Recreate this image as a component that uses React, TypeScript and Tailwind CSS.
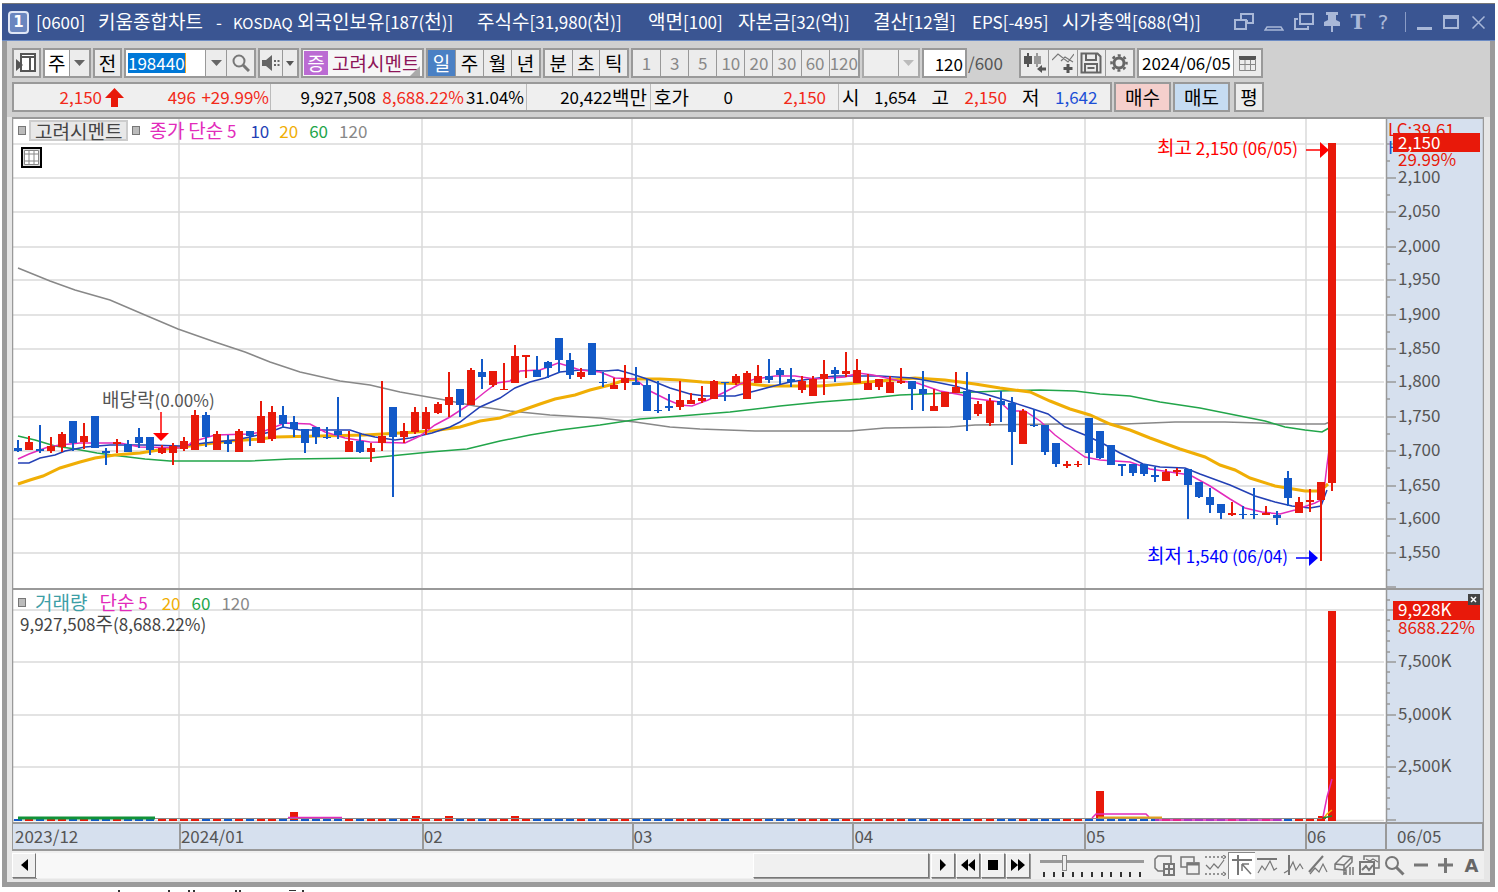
import type { ReactNode } from 'react'

const RED = '#e8190a'
const BLUE = '#1259c8'
const FONT = "font-['Noto_Sans_CJK_KR',sans-serif]"

type Candle = ['r' | 'b', number, number, number, number]

// colour, body top, body bottom, high, low
const CANDLES: Candle[] = [
  ['b', 448, 451, 440, 452], ['r', 442, 450, 436, 450], ['b', 449, 451, 425, 453], ['r', 446, 451, 437, 453],
  ['r', 434, 447, 432, 452], ['b', 421, 443, 421, 451], ['r', 436, 442, 423, 449], ['b', 416, 448, 416, 448],
  ['b', 451, 453, 448, 465], ['r', 442, 444, 439, 453], ['b', 444, 452, 440, 452], ['b', 437, 443, 428, 448],
  ['b', 437, 450, 437, 455], ['r', 448, 453, 445, 454], ['r', 446, 453, 443, 465], ['r', 441, 449, 437, 451],
  ['r', 415, 450, 410, 450], ['b', 415, 437, 412, 447], ['r', 434, 450, 431, 450], ['b', 441, 444, 435, 452],
  ['r', 431, 452, 429, 452], ['b', 431, 436, 431, 446], ['r', 416, 443, 401, 443], ['r', 412, 439, 406, 441],
  ['b', 415, 424, 406, 428], ['b', 422, 429, 416, 437], ['b', 429, 443, 429, 453], ['b', 427, 437, 427, 444],
  ['b', 437, 438, 427, 439], ['b', 431, 435, 397, 439], ['r', 441, 452, 431, 452], ['b', 441, 452, 434, 453],
  ['r', 448, 452, 443, 462], ['r', 436, 443, 381, 451], ['b', 407, 437, 407, 497], ['r', 431, 437, 423, 443],
  ['r', 412, 432, 407, 434], ['r', 412, 429, 407, 435], ['r', 404, 413, 402, 414], ['r', 397, 405, 372, 417],
  ['b', 389, 405, 389, 417], ['r', 370, 405, 368, 405], ['b', 372, 377, 359, 389], ['r', 371, 385, 371, 387],
  ['r', 389, 390, 363, 390], ['r', 356, 383, 345, 383], ['r', 355, 357, 355, 378], ['b', 370, 377, 356, 377],
  ['b', 362, 368, 361, 378], ['b', 338, 360, 338, 373], ['b', 360, 375, 353, 379], ['r', 372, 377, 368, 379],
  ['b', 343, 375, 343, 375], ['b', 382, 383, 372, 387], ['r', 385, 389, 378, 389], ['r', 378, 383, 365, 390],
  ['b', 382, 385, 367, 385], ['b', 385, 411, 379, 411], ['b', 410, 411, 381, 413], ['b', 406, 408, 394, 411],
  ['r', 400, 407, 381, 410], ['r', 400, 404, 393, 404], ['r', 398, 401, 386, 403], ['r', 381, 399, 380, 399],
  ['b', 382, 383, 382, 401], ['r', 376, 383, 374, 385], ['r', 373, 399, 371, 399], ['r', 376, 383, 365, 383],
  ['b', 376, 380, 359, 383], ['b', 370, 375, 368, 384], ['b', 379, 382, 368, 387], ['r', 381, 390, 376, 393],
  ['r', 379, 396, 376, 396], ['r', 374, 379, 360, 395], ['b', 370, 374, 367, 382], ['r', 371, 374, 352, 377],
  ['r', 370, 383, 359, 383], ['r', 383, 390, 374, 390], ['r', 379, 387, 379, 390], ['r', 382, 393, 376, 393],
  ['r', 381, 383, 368, 384], ['b', 381, 389, 381, 410], ['b', 389, 394, 371, 411], ['r', 406, 411, 389, 411],
  ['r', 392, 407, 392, 407], ['r', 387, 393, 372, 393], ['b', 391, 420, 372, 431], ['r', 404, 414, 401, 416],
  ['r', 401, 423, 398, 426], ['b', 401, 405, 391, 422], ['b', 403, 432, 397, 465], ['r', 411, 444, 409, 444],
  ['b', 425, 426, 409, 427], ['b', 425, 452, 425, 455], ['b', 443, 464, 443, 467], ['r', 464, 466, 461, 468],
  ['r', 464, 465, 461, 467], ['b', 418, 453, 418, 465], ['b', 431, 458, 431, 459], ['b', 445, 465, 445, 465],
  ['b', 464, 466, 464, 476], ['b', 464, 473, 464, 476], ['b', 464, 474, 464, 476], ['b', 475, 477, 467, 482],
  ['r', 472, 481, 469, 481], ['r', 470, 472, 468, 476], ['b', 469, 485, 469, 519], ['b', 482, 497, 482, 498],
  ['b', 497, 505, 488, 513], ['b', 504, 513, 504, 519], ['r', 513, 515, 502, 516], ['b', 514, 515, 506, 519],
  ['b', 514, 515, 488, 519], ['r', 513, 515, 506, 515], ['b', 515, 518, 511, 525], ['b', 478, 498, 471, 506],
  ['r', 502, 513, 497, 513], ['r', 500, 502, 489, 512], ['r', 482, 500, 482, 561], ['r', 143, 483, 143, 491],
]

const MA5 =
  '18,459 29,454 40,450 48,447 60,445 80,443 120,443 140,447 185,448 192,442 215,435 250,434 262,432 285,423 310,424 325,432 345,438 370,442 405,443 420,436 435,425 450,417 470,404 485,392 497,383 510,381 520,371 540,370 548,367 558,363 568,366 580,370 600,372 615,378 635,379 650,391 668,400 680,405 692,406 708,400 725,392 740,384 755,379 775,376 795,376 815,379 830,378 845,377 858,373 873,375 900,381 917,383 940,391 962,395 970,398 1000,402 1010,411 1025,411 1040,421 1055,435 1075,450 1085,457 1100,460 1130,462 1150,469 1170,472 1190,475 1210,486 1230,499 1245,508 1262,512 1280,514 1295,510 1315,503 1323,499 1327,465 1329,450'
const MA10 =
  '18,463 29,463 40,458 55,455 65,451 85,447 110,445 150,445 180,446 205,443 235,440 250,437 270,432 283,427 300,430 350,430 362,434 375,437 395,440 410,438 432,433 450,427 460,422 480,407 500,398 515,388 530,382 545,378 560,372 580,370 605,371 618,370 632,374 650,380 670,388 690,394 705,396 735,396 755,391 770,387 790,382 810,379 835,376 880,376 912,378 935,382 955,386 968,390 985,394 1005,400 1030,408 1048,414 1065,427 1085,435 1102,443 1120,453 1143,464 1160,467 1185,468 1200,474 1230,485 1255,496 1275,502 1292,506 1310,508 1321,506 1327,490'
const MA20 =
  '18,484 30,480 43,476 60,468 80,462 95,458 115,455 140,453 165,449 190,446 230,441 260,439 275,437 320,436 365,435 400,433 432,431 460,427 480,421 500,418 520,411 540,404 555,399 575,395 590,390 610,385 625,380 640,379 660,379 680,380 702,382 720,383 750,384 770,386 820,386 845,384 880,381 915,378 945,380 975,384 1000,388 1030,392 1050,401 1070,409 1090,415 1110,424 1130,430 1150,438 1180,449 1205,457 1220,465 1235,470 1250,478 1275,486 1305,491 1320,491 1328,484'
const MA60 =
  '18,436 35,440 55,446 75,449 97,453 120,456 145,459 170,461 250,461 290,459 370,458 390,456 430,452 467,449 500,441 530,435 560,430 600,425 640,419 680,416 730,412 780,406 820,402 860,399 900,395 950,393 1000,391 1040,390 1075,391 1100,394 1130,396 1160,402 1200,408 1240,416 1265,421 1285,427 1305,430 1322,432 1329,428'
const MA120 =
  '18,268 50,281 75,290 110,300 145,315 178,329 215,342 245,352 270,362 300,372 340,381 370,385 400,392 445,400 475,406 510,411 550,415 600,418 635,422 670,427 700,429 755,431 850,431 885,428 950,427 975,425 1060,424 1125,424 1175,422 1225,422 1260,423 1275,424 1325,424 1332,421'

const PRICE_GRID = [144, 178, 212, 247, 280, 315, 349, 382, 417, 451, 486, 519, 553]
const PRICE_LABELS = ['', '2,100', '2,050', '2,000', '1,950', '1,900', '1,850', '1,800', '1,750', '1,700', '1,650', '1,600', '1,550']
const MONTHS = [179, 422, 632, 853, 1085, 1306]
const VOLUME_GRID = [610, 662, 715, 767]
const VOLUME_LABELS = ['', '7,500K', '5,000K', '2,500K']

const candleX = (i: number) => Math.round(18 + i * 11.04)

const TITLE = [
  { text: '[0600]', w: 'w-[62px]' },
  { text: '키움종합차트', w: 'w-[118px]' },
  { text: '-', w: 'w-[17px]' },
  { text: 'KOSDAQ', w: 'w-[64px]', size: 'text-[15px]' },
  { text: '외국인보유[187(천)]', w: 'w-[180px]' },
  { text: '주식수[31,980(천)]', w: 'w-[171px]' },
  { text: '액면[100]', w: 'w-[90px]' },
  { text: '자본금[32(억)]', w: 'w-[135px]' },
  { text: '결산[12월]', w: 'w-[99px]' },
  { text: 'EPS[-495]', w: 'w-[90px]' },
  { text: '시가총액[688(억)]', w: 'w-[152px]' },
]

// Hangul is set larger than the digits and Latin letters beside it
const splitHangul = (text: string) => text.split(/([가-힣]+)/).filter(Boolean)
const isHangul = (part: string) => /[가-힣]/.test(part)

function Mixed({ text }: { text: string }) {
  return splitHangul(text).map((part, i) => (isHangul(part) ? <span key={i} className="text-[19px]">{part}</span> : part))
}

function SvgMixed({ text }: { text: string }) {
  return splitHangul(text).map((part, i) => (isHangul(part) ? <tspan key={i} className="text-[19px]">{part}</tspan> : part))
}

function Down({ className = 'text-[#666]' }: { className?: string }) {
  return (
    <svg width="11" height="6" viewBox="0 0 11 6" className={className}>
      <path d="M0 0h11L5.5 6z" fill="currentColor" />
    </svg>
  )
}

function Group({ children, className = '' }: { children: ReactNode; className?: string }) {
  return (
    <div className={`flex h-[30px] shrink-0 divide-x divide-[#999] border-2 border-[#999] bg-[#ececec] ${className}`}>{children}</div>
  )
}

interface ToolProps {
  label: string
  children: ReactNode
  size?: string
  className?: string
}

function Tool({ label, children, size = 'flex-1', className = '' }: ToolProps) {
  return (
    <button aria-label={label} className={`flex items-center justify-center ${size} ${className}`}>
      {children}
    </button>
  )
}

function TitleBar() {
  return (
    <header className="flex h-[38px] items-center border-t border-[#777] border-b border-b-[#6d8cc4] bg-[#3a5592] pl-[6px] text-[17px] leading-[22px] text-white">
      <span className="mr-[7px] flex h-[23px] w-[21px] shrink-0 items-center justify-center rounded-sm border-2 border-[#dfe6f5] bg-[#6a86bf] font-['DejaVu_Sans'] text-[15px] font-bold leading-none">1</span>
      <h1 className="flex items-baseline whitespace-nowrap">
        {TITLE.map((t) => (
          <span key={t.text} className={`shrink-0 ${t.w} ${t.size ?? ''}`}><Mixed text={t.text} /></span>
        ))}
      </h1>
      <div className="ml-[15px] flex shrink-0 items-center text-[#a9b8d8]">
        <Tool label="화면 분리" size="w-[30px]">
          <svg width="22" height="20" viewBox="0 0 22 20" fill="none" stroke="currentColor" strokeWidth="2">
            <path d="M8 7V2h12v9h-6M2 8h11v9H2zM14 11v-3" />
          </svg>
        </Tool>
        <Tool label="접기" size="w-[30px]">
          <svg width="20" height="20" viewBox="0 0 20 20" fill="none" stroke="currentColor" strokeWidth="1.5">
            <path d="M3 15h14l2 3H1z" />
          </svg>
        </Tool>
        <Tool label="복제" size="w-[30px]">
          <svg width="22" height="20" viewBox="0 0 22 20" fill="none" stroke="currentColor" strokeWidth="2">
            <path d="M7 2h13v10H7zM5 7H2v10h13v-3" />
          </svg>
        </Tool>
        <Tool label="고정" size="w-[26px]">
          <svg width="18" height="22" viewBox="0 0 18 22" fill="currentColor">
            <path d="M3 1h12v3h-2v5l4 2v4h-7v6H8v-6H1v-4l4-2V4H3z" />
          </svg>
        </Tool>
        <Tool label="글꼴" size="w-[26px]" className="font-['DejaVu_Serif'] text-[20px] font-bold leading-none">T</Tool>
        <Tool label="도움말" size="w-[24px]" className="font-['DejaVu_Sans'] text-[20px] leading-none">?</Tool>
        <span className="ml-[10px] h-5 w-px bg-[#8a9cc6]" />
        <Tool label="최소화" size="w-[16px]" className="ml-[10px]">
          <span className="mt-[13px] h-[3px] w-[15px] bg-current" />
        </Tool>
        <Tool label="최대화" size="w-[16px]" className="ml-[11px]">
          <span className="h-[14px] w-[16px] border-2 border-t-4 border-current" />
        </Tool>
        <Tool label="닫기" size="w-[14px]" className="ml-[12px]">
          <svg width="13" height="13" viewBox="0 0 13 13" stroke="currentColor" strokeWidth="1.5">
            <path d="M.5.5l12 12M12.5.5l-12 12" />
          </svg>
        </Tool>
      </div>
    </header>
  )
}

function Toolbar() {
  return (
    <div className="flex gap-[2px] pt-[7px] text-[19px] leading-[22px] text-black">
      <Group className="w-[29px]">
        <Tool label="패널">
          <svg width="21" height="20" viewBox="0 0 21 20">
            <path d="M5 1h14v17H5zM5 4h14M14 4v14" fill="#fff" stroke="#555" strokeWidth="2" />
            <path d="M0 6l7 6-7 6z" fill="#555" />
          </svg>
        </Tool>
      </Group>
      <div className="relative h-[30px] w-[48px] shrink-0 border-2 border-[#999] bg-white">
        <select aria-label="종목 구분" className="h-full w-full appearance-none pl-[3px] outline-none">
          <option>주</option>
        </select>
        <span className="pointer-events-none absolute inset-y-0 right-0 flex w-[20px] items-center justify-center border-l border-[#999] bg-[#ececec]">
          <Down />
        </span>
      </div>
      <Group className="w-[29px]"><Tool label="전">전</Tool></Group>
      <Group className="w-[132px]">
        <div className="flex w-[80px] items-center bg-white pl-[2px]">
          <input aria-label="종목코드" defaultValue="198440" className="h-[20px] w-[58px] border-r border-[#f5a623] bg-[#0078d7] text-[17px] text-white outline-none" />
        </div>
        <button aria-label="종목 목록" className="flex w-[21px] items-center justify-center"><Down /></button>
        <Tool label="검색">
          <svg width="18" height="18" viewBox="0 0 18 18" fill="none" stroke="#777">
            <circle cx="7" cy="7" r="5.5" strokeWidth="2" />
            <path d="M11 11l6 6" strokeWidth="3" />
          </svg>
        </Tool>
      </Group>
      <Group className="w-[41px]">
        <Tool label="소리">
          <svg width="18" height="16" viewBox="0 0 18 16" fill="#666">
            <path d="M0 5h4l6-5v16l-6-5H0zM12 5h2v2h-2zM12 9h2v2h-2zM15.5 5h2v2h-2zM15.5 9h2v2h-2z" />
          </svg>
        </Tool>
        <button aria-label="소리 설정" className="flex w-[14px] items-center justify-center">
          <svg width="8" height="5" viewBox="0 0 8 5"><path d="M0 0h8L4 5z" fill="#555" /></svg>
        </button>
      </Group>
      <div className="flex h-[30px] w-[123px] shrink-0 items-center border-2 border-[#999] bg-[#f6f6f6] pl-px">
        <span className="mr-[4px] flex h-[24px] w-[24px] shrink-0 items-center justify-center bg-[#bb6bd3] text-white">증</span>
        <span className="whitespace-nowrap text-[#8d1558]">고려시멘트</span>
        <svg width="10" height="10" viewBox="0 0 10 10" className="-ml-[9px] shrink-0 self-end"><path d="M10 0v10H0z" fill="#aaa" /></svg>
      </div>
      <Group className="w-[115px]">
        <Tool label="일" className="bg-[#4a80c4] text-white">일</Tool>
        <Tool label="주">주</Tool>
        <Tool label="월">월</Tool>
        <Tool label="년">년</Tool>
      </Group>
      <Group className="w-[86px]">
        <Tool label="분">분</Tool>
        <Tool label="초">초</Tool>
        <Tool label="틱">틱</Tool>
      </Group>
      <Group className="w-[229px] text-[17px] text-[#888]">
        {['1', '3', '5', '10', '20', '30', '60', '120'].map((n) => (
          <Tool key={n} label={`${n}분`}>{n}</Tool>
        ))}
      </Group>
      <div className="relative h-[30px] w-[58px] shrink-0 border-2 border-[#aaa] bg-[#eee]">
        <select aria-label="사용자 주기" disabled className="h-full w-full appearance-none outline-none">
          <option />
        </select>
        <span className="pointer-events-none absolute inset-y-0 right-0 flex w-[20px] items-center justify-center border-l border-[#999]">
          <Down className="text-[#bbb]" />
        </span>
      </div>
      <label className="flex items-center text-[17px]">
        <input aria-label="조회 개수" defaultValue="120" className="h-[30px] w-[45px] border-2 border-[#999] bg-white pr-[2px] text-right outline-none" />
        <span className="w-[50px] pl-px text-[#555]">/600</span>
      </label>
      <Group className="w-[116px]">
        <Tool label="봉 추가">
          <svg width="22" height="22" viewBox="0 0 22 22">
            <path d="M0 4h8v8H0zM3 1h2v14H3z" fill="#555" />
            <path d="M10 4h7v8h-7zM12 1h2v14h-2z" fill="#999" />
            <path d="M13 17l5-4v2.500h4v3h-4V21z" fill="#555" />
          </svg>
        </Tool>
        <Tool label="지표 추가">
          <svg width="22" height="22" viewBox="0 0 22 22" fill="none" stroke="#777">
            <path d="M0 8l6-6 10 8 6-8M9 9l4-4 8 5" strokeWidth="1.2" />
            <path d="M16 12v9M11.5 16.5h9" stroke="#555" strokeWidth="3" />
          </svg>
        </Tool>
        <Tool label="저장">
          <svg width="22" height="22" viewBox="0 0 22 22" fill="none" stroke="#666" strokeWidth="2">
            <path d="M1.5 1.5h16l3 3v16h-19zM6 2v6h10V2M5 20v-8h12v8M7.5 16h7" />
          </svg>
        </Tool>
        <Tool label="설정">
          <svg width="18" height="18" viewBox="0 0 18 18" fill="none" stroke="#666">
            <circle cx="9" cy="9" r="5" strokeWidth="3" />
            <circle cx="9" cy="9" r="7.5" strokeWidth="2.5" strokeDasharray="3 2.89" strokeDashoffset="1.5" />
          </svg>
        </Tool>
      </Group>
      <Group className="w-[126px]">
        <input aria-label="조회 일자" defaultValue="2024/06/05" className="w-[95px] bg-white pl-[3px] text-[17px] outline-none" />
        <Tool label="달력">
          <svg width="17" height="16" viewBox="0 0 17 16">
            <path d="M0 1h17v4H0z" fill="#555" />
            <path d="M.5 4v11.5h16V4M.5 9.5h16M6 5v10M11.5 5v10" fill="none" stroke="#888" />
          </svg>
        </Tool>
      </Group>
    </div>
  )
}

function QuoteBar() {
  return (
    <div className="flex gap-[2px] pt-[4px] text-[17px] leading-[22px] text-black">
      <div className="flex h-[30px] w-[1100px] items-center divide-x divide-[#bbb] whitespace-nowrap border-2 border-[#999] bg-[#efefef] [&>div]:flex [&>div]:h-full [&>div]:shrink-0 [&>div]:items-center">
        <div className="w-[257px] text-[#f22a1a]">
          <span className="w-[88px] text-right">2,150</span>
          <svg width="19" height="19" viewBox="0 0 19 19" className="ml-[3px]"><path d="M9.5 0L19 10h-6v9H6v-9H0z" fill={RED} /></svg>
          <span className="w-[72px] text-right">496</span>
          <span className="w-[73px] text-right">+29.99%</span>
        </div>
        <div className="w-[256px]">
          <span className="w-[105px] text-right">9,927,508</span>
          <span className="w-[88px] text-right text-[#f22a1a]">8,688.22%</span>
          <span className="w-[60px] text-right">31.04%</span>
        </div>
        <div className="w-[124px] justify-end pr-[3px]"><Mixed text="20,422백만" /></div>
        <div className="w-[188px] pl-[3px]">
          <Mixed text="호가" />
          <span className="ml-auto">0</span>
          <span className="w-[105px] pr-[12px] text-right text-[#f22a1a]">2,150</span>
        </div>
        <div className="flex-1 pl-[3px]">
          <Mixed text="시" />
          <span className="w-[57px] text-right">1,654</span>
          <span className="ml-[15px]"><Mixed text="고" /></span>
          <span className="w-[58px] text-right text-[#f22a1a]">2,150</span>
          <span className="ml-[15px]"><Mixed text="저" /></span>
          <span className="w-[58px] text-right text-[#1c4fd6]">1,642</span>
        </div>
      </div>
      <button className="h-[30px] w-[57px] border-2 border-[#999] bg-[#f5cfcc] text-[19px]">매수</button>
      <button className="h-[30px] w-[57px] border-2 border-[#999] bg-[#c6dcf2] text-[19px]">매도</button>
      <button className="ml-[2px] h-[30px] w-[30px] border-2 border-[#999] bg-[#ececec] text-[19px]">평</button>
    </div>
  )
}

function Marker() {
  return <span className="h-[9px] w-[8px] shrink-0 border border-[#777] bg-[#bbb]" />
}

function PriceChart() {
  return (
    <svg viewBox="12 119 1472 469" className="block h-auto w-full text-[17px]" role="img" aria-label="가격 차트">
      <rect x="12" y="119" width="1374" height="469" fill="#fff" />
      <rect x="1386" y="119" width="98" height="469" fill="#d6e0ee" />
      <g stroke="#dadada" strokeWidth="1.5">
        {PRICE_GRID.map((y) => <path key={y} d={`M13 ${y}H1384`} />)}
        {MONTHS.map((x) => <path key={x} d={`M${x} 119V588`} />)}
      </g>
      <g stroke="#999" strokeWidth="1.5">
        <path d="M12.500 119V588M1483.500 119V588M1386.500 119V588" />
        {PRICE_GRID.map((y) => <path key={y} d={`M1386 ${y}h10M1386 ${y + 17}h4`} />)}
        <path d="M1386 587h10" />
      </g>
      <g fill="none" strokeWidth="1.5">
        <polyline points={MA120} stroke="#888" />
        <polyline points={MA60} stroke="#22a54a" />
        <polyline points={MA20} stroke="#f0ae05" strokeWidth="3" />
        <polyline points={MA10} stroke="#2340b5" />
        <polyline points={MA5} stroke="#e22bbb" />
      </g>
      {CANDLES.map(([c, top, bottom, high, low], i) => (
        <g key={i} fill={c === 'r' ? RED : BLUE}>
          <rect x={candleX(i) - 1} y={high} width="2" height={low - high} />
          <rect x={candleX(i) - 4} y={top} width="8" height={bottom - top} />
        </g>
      ))}
      <text x="102" y="407" fill="#555"><SvgMixed text="배당락(0.00%)" /></text>
      <path d="M161 412v22" stroke="#f00" strokeWidth="1.5" />
      <path d="M153 433h16l-8 8z" fill="#f00" />
      <text x="1298" y="155" textAnchor="end" fill="#f00"><SvgMixed text="최고 2,150 (06/05)" /></text>
      <path d="M1306 150h16" stroke="#f00" strokeWidth="1.5" />
      <path d="M1320 142v16l9-8z" fill="#f00" />
      <text x="1288" y="563" textAnchor="end" fill="#00f"><SvgMixed text="최저 1,540 (06/04)" /></text>
      <path d="M1296 558h16" stroke="#00f" strokeWidth="1.5" />
      <path d="M1309 550v16l9-8z" fill="#00f" />
      <g fill="#555">
        {PRICE_LABELS.map((t, i) => t && <text key={i} x="1398" y={PRICE_GRID[i] + 5}>{t}</text>)}
      </g>
      <text x="1388" y="136" fill={RED}>LC:39.61</text>
      <text x="1388" y="154" fill={BLUE}>H</text>
      <rect x="1393" y="152" width="87" height="17" fill="#d6e0ee" />
      <text x="1398" y="166" fill={RED}>29.99%</text>
      <rect x="1393" y="133" width="87" height="19" fill={RED} />
      <text x="1398" y="149" fill="#fff">2,150</text>
    </svg>
  )
}

function VolumeChart() {
  return (
    <svg viewBox="12 590 1472 232" className="block h-auto w-full text-[17px]" role="img" aria-label="거래량 차트">
      <rect x="12" y="590" width="1374" height="232" fill="#fff" />
      <rect x="1386" y="590" width="98" height="232" fill="#d6e0ee" />
      <g stroke="#dadada" strokeWidth="1.5">
        {VOLUME_GRID.map((y) => <path key={y} d={`M13 ${y}H1384`} />)}
        <path d="M13 820.500H1384" />
        {MONTHS.map((x) => <path key={x} d={`M${x} 590V822`} />)}
      </g>
      <g stroke="#999" strokeWidth="1.5">
        <path d="M12.500 590V822M1483.500 590V822M1386.500 590V822M1386 820h10" />
        {VOLUME_GRID.map((y) => (
          <path key={y} d={`M1386 ${y}h10M1386 ${y + 10}h4M1386 ${y + 21}h4M1386 ${y + 31}h4M1386 ${y + 42}h4`} />
        ))}
        <path d="M1386 600h4" />
      </g>
      {CANDLES.map(([c], i) => (
        <rect key={i} x={candleX(i) - 4} y="819" width="8" height="2" fill={c === 'r' ? RED : BLUE} />
      ))}
      <path d="M290 812h8v8h-8zM412 816h8v3h-8zM445 816h8v3h-8zM511 816h8v3h-8zM1096 791h8v28h-8zM1318 816h8v3h-8zM1328 611h8v210h-8z" fill={RED} />
      <path d="M18 818H155" stroke="#119238" strokeWidth="3" />
      <path d="M155 818.500H1322" stroke="#888" />
      <path d="M288 817.500h54M1092 818l4-4h50l3 3M1155 820h127" stroke="#e22bbb" strokeWidth="1.5" fill="none" />
      <path d="M1098 817.500h64" stroke="#e0a020" strokeWidth="2" />
      <path d="M1323 817l4-20 5-18" stroke="#e22bbb" strokeWidth="1.5" fill="none" />
      <path d="M1324 818l3-4 5-4" stroke="#f0ae05" strokeWidth="1.5" fill="none" />
      <path d="M1323 818l9-2" stroke="#119238" strokeWidth="1.5" />
      <g fill="#555">
        {VOLUME_LABELS.map((t, i) => t && <text key={i} x="1398" y={VOLUME_GRID[i] + 5}>{t}</text>)}
      </g>
      <rect x="1393" y="601" width="87" height="19" fill={RED} />
      <text x="1398" y="616" fill="#fff">9,928K</text>
      <text x="1398" y="634" fill={RED}>8688.22%</text>
      <rect x="1468" y="594" width="12" height="11" fill="#444" />
      <path d="M1471 597l5 5m0-5l-5 5" stroke="#fff" strokeWidth="1.5" />
    </svg>
  )
}

function DateAxis() {
  const cell = 'border-l-2 border-[#999]'
  return (
    <div className="grid h-[29px] grid-cols-[166fr_243fr_210fr_221fr_232fr_221fr_80fr_99fr] items-stretch border-y-2 border-l border-[#999] bg-[#d6e0ee] text-[17px] leading-[23px] text-[#555]">
      <span className="pl-[2px]">2023/12</span>
      <span className={cell}>2024/01</span>
      <span className={cell}>02</span>
      <span className={cell}>03</span>
      <span className={cell}>04</span>
      <span className={cell}>05</span>
      <span className={cell}>06</span>
      <span className="border-x-2 border-[#999] pl-[10px]">06/05</span>
    </div>
  )
}

const RAISED = 'border border-t-white border-l-white border-r-[#777] border-b-[#777] shadow-[1px_1px_0_#999]'

const PLAY = [
  { label: '재생', d: 'M6 3l6 6-6 6z' },
  { label: '뒤로', d: 'M9 3v12L2 9zM16 3v12L9 9z' },
  { label: '정지', d: 'M4 4h10v10H4z' },
  { label: '앞으로', d: 'M2 3v12l7-6zM9 3v12l7-6z' },
]

const DRAW_TOOLS: { label: string; icon: ReactNode }[] = [
  { label: '차트 추가', icon: <><path d="M17 8V1H4L1 4v9l3 3h5" /><path d="M10 9h10v11H10zM15 9v11M10 14h10" strokeWidth="2" /></> },
  { label: '창 겹치기', icon: <><path d="M14 7V2H1v10h6" /><path d="M7 8h12v11H7z" /><path d="M7 9h12" strokeWidth="3" /></> },
  { label: '영역', icon: <><path d="M0 2h20M0 19h20" strokeDasharray="2 2" /><path d="M1 10l4 4 4-5 4 4 6-8M18 0l3 2-3 2M18 17l3 2-3 2" strokeWidth="1.2" /></> },
  { label: '십자선', icon: <><path d="M0 5h20M6 0v20" strokeWidth="2" /><path d="M10 9h7M10 9v7M10 9l9 10" /></> },
  { label: '수평선', icon: <><path d="M0 4h20" strokeWidth="2" /><path d="M1 18l4-7 3 4 5-9 4 9 3-2" strokeWidth="1.2" /></> },
  { label: '수직선', icon: <><path d="M6 0v20" strokeWidth="2" /><path d="M1 18l5-3 4-8 3 8 4-6 3 5" strokeWidth="1.2" /></> },
  { label: '추세선', icon: <><path d="M1 17L15 1" strokeWidth="2" /><path d="M2 19l5-6 4 4 4-8 4 8" strokeWidth="1.2" /></> },
  { label: '모두 지우기', icon: <><path d="M1 9l8-8 9 1v5l-8 8-9-1zM1 9l9 1v5M10 10l8-8" /><path d="M10 20v-5h2v5M10 18h2M16 12v8M19 12v8" strokeWidth="1.5" /></> },
  { label: '비교 차트', icon: <><path d="M5 5V1h15v12h-4" /><path d="M7 4l4 2 3-2 5 3" strokeWidth="1.2" /><path d="M1 7h14v12H1zM3 15l4-4 3 4 4-5" strokeWidth="2" /></> },
  { label: '돋보기', icon: <><circle cx="8" cy="8" r="6" strokeWidth="2" /><path d="M12.5 12.5l7 7" strokeWidth="3" /></> },
  { label: '축소', icon: <path d="M4 10h14" strokeWidth="3" /> },
  { label: '확대', icon: <path d="M3 10h15M10.5 3v15" strokeWidth="3" /> },
]

function BottomBar() {
  return (
    <div className="flex h-[28px] items-center bg-[#efefef]">
      <button aria-label="왼쪽으로" className={`flex h-[25px] w-[24px] shrink-0 items-center justify-center bg-[#f0f0f0] ${RAISED}`}>
        <svg width="7" height="12" viewBox="0 0 7 12"><path d="M7 0v12L0 6z" /></svg>
      </button>
      <div className="flex h-[25px] flex-1 justify-end bg-[#f8f8f8]">
        <div className={`h-full w-[176px] bg-[#f0f0f0] ${RAISED}`} />
      </div>
      <div className="ml-[2px] flex gap-px">
        {PLAY.map((p) => (
          <button key={p.label} aria-label={p.label} className={`flex h-[25px] w-[24px] items-center justify-center bg-[#f0f0f0] ${RAISED}`}>
            <svg width="18" height="18" viewBox="0 0 18 18"><path d={p.d} /></svg>
          </button>
        ))}
      </div>
      <div className="ml-[10px] w-[104px]">
        <input
          type="range"
          aria-label="재생 속도"
          defaultValue={22}
          className="block h-[16px] w-full appearance-none bg-transparent [&::-webkit-slider-runnable-track]:h-[3px] [&::-webkit-slider-runnable-track]:bg-[#999] [&::-webkit-slider-thumb]:-mt-[5px] [&::-webkit-slider-thumb]:h-[16px] [&::-webkit-slider-thumb]:w-[5px] [&::-webkit-slider-thumb]:appearance-none [&::-webkit-slider-thumb]:border [&::-webkit-slider-thumb]:border-[#888] [&::-webkit-slider-thumb]:bg-[#eee]"
        />
        <div className="mt-[2px] flex justify-between px-[3px]">
          {Array.from({ length: 11 }, (_, i) => <span key={i} className="h-[5px] w-[2px] bg-[#333]" />)}
        </div>
      </div>
      <div className="ml-[8px] flex w-[332px]">
        {DRAW_TOOLS.map((t, i) => (
          <button key={t.label} aria-label={t.label} className={`flex h-[27px] flex-1 items-center justify-center ${i === 3 ? 'border-t border-l border-[#888] bg-white' : ''}`}>
            <svg width="21" height="21" viewBox="0 0 21 21" fill="none" stroke="#777" strokeWidth="1.5" className="shrink-0">{t.icon}</svg>
          </button>
        ))}
        <button aria-label="자동" className="flex-1 font-['DejaVu_Sans'] text-[18px] font-bold text-[#666]">A</button>
      </div>
    </div>
  )
}

export default function App() {
  return (
    <main className={`h-screen overflow-hidden bg-white pt-[3px] pr-[3px] pl-[2px] ${FONT}`}>
      <section className="flex flex-col">
        <TitleBar />
        <div className="border-x-[5px] border-b-[5px] border-[#9b9b9b] bg-[#e6e6e6]">
          <div className="bg-[#d0d0d0] pb-[5px] pl-[5px]">
            <Toolbar />
            <QuoteBar />
          </div>
          <div className="pr-[6px] pb-[3px] pl-[5px]">
            <div className="relative border-t-2 border-[#999]">
              <PriceChart />
              <div className="absolute top-px left-[6px] flex items-center text-[17px] leading-[18px] whitespace-nowrap">
                <Marker />
                <span className="ml-[3px] border-2 border-[#ccc] bg-[#e8e8e8] px-[4px] text-[19px] leading-[17px] text-[#444]">고려시멘트</span>
                <span className="ml-[4px] flex"><Marker /></span>
                <span className="ml-[9px] text-[#e22bbb]"><Mixed text="종가 단순 5" /></span>
                <span className="ml-[14px] text-[#2340b5]">10</span>
                <span className="ml-[10px] text-[#f0ae05]">20</span>
                <span className="ml-[11px] text-[#22a54a]">60</span>
                <span className="ml-[11px] text-[#888]">120</span>
              </div>
              <button aria-label="데이터 표" className="absolute top-[28px] left-[9px] flex h-[21px] w-[21px] items-center justify-center border-2 border-black bg-[#ddd]">
                <svg width="15" height="15" viewBox="0 0 15 15" fill="#fff" stroke="#888">
                  <path d="M.5.5h14v14H.5zM.5 4h14M.5 11h14M5 .5v14M10 .5v14" />
                </svg>
              </button>
            </div>
            <div className="relative border-t-2 border-[#999]">
              <VolumeChart />
              <div className="absolute top-[2px] left-[6px] text-[17px] leading-[20px] whitespace-nowrap">
                <div className="flex items-center">
                  <Marker />
                  <span className="ml-[9px] text-[#3d9ea6]"><Mixed text="거래량" /></span>
                  <span className="ml-[12px] text-[#e22bbb]"><Mixed text="단순 5" /></span>
                  <span className="ml-[14px] text-[#f0ae05]">20</span>
                  <span className="ml-[11px] text-[#22a54a]">60</span>
                  <span className="ml-[11px] text-[#888]">120</span>
                </div>
                <div className="pl-[2px] text-[#444]"><Mixed text="9,927,508주(8,688.22%)" /></div>
              </div>
            </div>
            <DateAxis />
            <BottomBar />
          </div>
        </div>
      </section>
      <svg width="320" height="4" viewBox="0 0 320 4" className="mt-px block" fill="#333">
        <path d="M116 2h2v2h-2zM166 2h2v2h-2zM186 2h2v2h-2zM191 2h2v2h-2zM233 2h2v2h-2zM237 2h2v2h-2zM287 2h7v1h-7zM300 2h2v2h-2z" />
      </svg>
    </main>
  )
}
